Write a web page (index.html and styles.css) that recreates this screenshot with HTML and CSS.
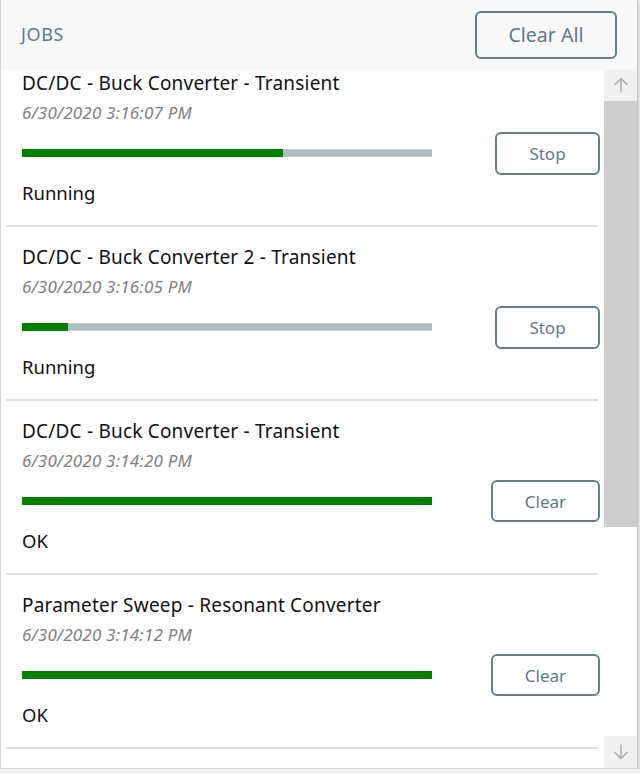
FILE: index.html
```html
<!DOCTYPE html>
<html lang="en">
<head>
  <meta charset="UTF-8" />
  <title>Jobs</title>
  <link rel="stylesheet" href="styles.css">
</head>
<body>

<div class="panel">
  <div class="header">
    <span class="title">JOBS</span>
    <button class="btn btnBig">Clear All</button>
  </div>

  <div class="body">
    <div class="list">
      <div class="items">

        <div class="job">
          <div class="jobName">DC/DC - Buck Converter - Transient</div>
          <div class="jobDate">6/30/2020 3:16:07 PM</div>
          <div class="barRow">
            <div class="track"><div class="fill" style="width: 63.7%"></div></div>
            <button class="btn btnStop">Stop</button>
          </div>
          <div class="jobStatus">Running</div>
        </div>

        <div class="job">
          <div class="jobName">DC/DC - Buck Converter 2 - Transient</div>
          <div class="jobDate">6/30/2020 3:16:05 PM</div>
          <div class="barRow">
            <div class="track"><div class="fill" style="width: 11.2%"></div></div>
            <button class="btn btnStop">Stop</button>
          </div>
          <div class="jobStatus">Running</div>
        </div>

        <div class="job">
          <div class="jobName">DC/DC - Buck Converter - Transient</div>
          <div class="jobDate">6/30/2020 3:14:20 PM</div>
          <div class="barRow">
            <div class="track"><div class="fill" style="width: 100%"></div></div>
            <button class="btn btnClear">Clear</button>
          </div>
          <div class="jobStatus">OK</div>
        </div>

        <div class="job">
          <div class="jobName">Parameter Sweep - Resonant Converter</div>
          <div class="jobDate">6/30/2020 3:14:12 PM</div>
          <div class="barRow">
            <div class="track"><div class="fill" style="width: 100%"></div></div>
            <button class="btn btnClear">Clear</button>
          </div>
          <div class="jobStatus">OK</div>
        </div>

      </div>
    </div>

    <div class="scrollbar">
      <div class="arrow">
        <svg width="18" height="18" viewBox="0 0 18 18"><path d="M9 2.5v14M2.5 9L9 2.5 15.5 9" fill="none" stroke="#adadad" stroke-width="1.5"/></svg>
      </div>
      <div class="thumb"></div>
      <div class="rest"></div>
      <div class="arrow">
        <svg width="18" height="18" viewBox="0 0 18 18"><path d="M9 1.5v14M2.5 9L9 15.5 15.5 9" fill="none" stroke="#adadad" stroke-width="1.5"/></svg>
      </div>
    </div>
  </div>
</div>

</body>
</html>
```

FILE: styles.css
```css
    body {
      margin: 0;
      background-color: #f2f2f2;
      font-family: "Noto Sans", "Open Sans", sans-serif;
      color: #111111;
    }

    .panel {
      width: 636px;
      height: 768px;
      border-left: 1px solid #d4d4d4;
      border-right: 1px solid #c4c4c4;
      border-bottom: 1px solid #d4d4d4;
      background-color: #ffffff;
      box-shadow: 0 2px 4px rgba(0, 0, 0, 0.25);
      display: flex;
      flex-direction: column;
    }

    .header {
      height: 69px;
      flex: none;
      background-color: #f8f8f8;
      display: flex;
      align-items: center;
      justify-content: space-between;
      padding: 0 20px 0 20px;
    }

    .title {
      font-size: 18px;
      letter-spacing: 0.6px;
      color: #5b7c8d;
      margin-top: -2px;
    }

    .btn {
      font-family: inherit;
      background-color: #ffffff;
      border: 2px solid #637f8d;
      border-radius: 6px;
      color: #5d7a89;
      cursor: pointer;
      padding: 0;
    }

    .btnBig {
      width: 142px;
      height: 48px;
      font-size: 19.5px;
      background-color: #f8f8f8;
    }

    .btnStop {
      width: 105px;
      height: 43px;
      font-size: 17px;
    }

    .btnClear {
      width: 109px;
      height: 42px;
      font-size: 17px;
    }

    .body {
      flex: 1;
      display: flex;
      min-height: 0;
    }

    .list {
      flex: 1;
      overflow: hidden;
    }

    .items {
      margin-top: -16px;
    }

    .job {
      margin: 0 6px 0 5px;
      padding: 15px 0 17px 16px;
      border-bottom: 2px solid #e0e0e0;
    }

    .jobName {
      font-size: 19px;
      letter-spacing: 0.2px;
      line-height: 30px;
    }

    .jobDate {
      font-size: 17px;
      letter-spacing: 0.2px;
      line-height: 30px;
      font-style: italic;
      color: #808080;
    }

    .barRow {
      display: flex;
      align-items: center;
      justify-content: space-between;
      margin-top: 21px;
      height: 8px;
    }

    .barRow .btn {
      margin-right: -2px;
    }

    .track {
      width: 410px;
      height: 8px;
      background-color: #adbbc3;
      box-shadow: inset 0 1px 0 #c4ced4, inset 0 -1px 0 #c4ced4;
    }

    .fill {
      height: 100%;
      background-color: #008000;
    }

    .jobStatus {
      font-size: 18.5px;
      line-height: 30px;
      margin-top: 21px;
    }

    .scrollbar {
      width: 33px;
      flex: none;
      display: flex;
      flex-direction: column;
      background-color: #ffffff;
    }

    .arrow {
      height: 32px;
      flex: none;
      background-color: #f0f0f0;
      display: flex;
      align-items: center;
      justify-content: center;
    }

    .thumb {
      height: 426px;
      flex: none;
      background-color: #cdcdcd;
    }

    .rest {
      flex: 1;
    }
```
